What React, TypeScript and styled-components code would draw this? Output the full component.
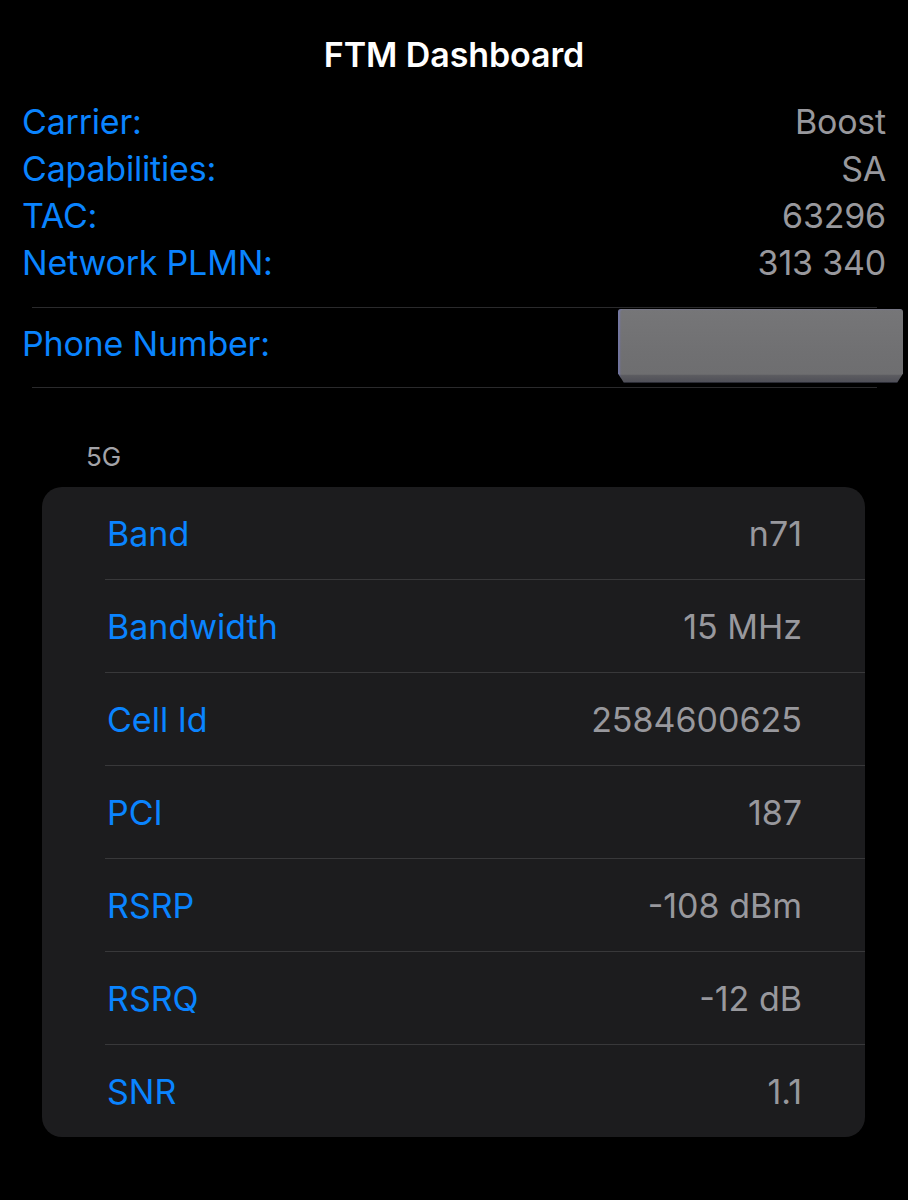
import React from 'react'
import styled, { createGlobalStyle } from 'styled-components'

type Field = { label: string, value: string }

const carrierInfo: Field[] = [
  { label: 'Carrier:', value: 'Boost' },
  { label: 'Capabilities:', value: 'SA' },
  { label: 'TAC:', value: '63296' },
  { label: 'Network PLMN:', value: '313 340' },
]

const cellInfo: Field[] = [
  { label: 'Band', value: 'n71' },
  { label: 'Bandwidth', value: '15 MHz' },
  { label: 'Cell Id', value: '2584600625' },
  { label: 'PCI', value: '187' },
  { label: 'RSRP', value: '-108 dBm' },
  { label: 'RSRQ', value: '-12 dB' },
  { label: 'SNR', value: '1.1' },
]

const GlobalStyle = createGlobalStyle`
  html, body {
    margin: 0;
    padding: 0;
    background: #000;
  }
  body {
    font-family: Inter, "Noto Sans", "Liberation Sans", sans-serif;
    -webkit-font-smoothing: antialiased;
  }
`

const Page = styled.div`
  width: 908px;
  min-height: 1200px;
  background: #000;
  color: #fff;
  overflow: hidden;
`

const Title = styled.h1`
  margin: 0 0 18px;
  padding-top: 30px;
  height: 50px;
  line-height: 50px;
  font-size: 34px;
  font-weight: 600;
  text-align: center;
  letter-spacing: -0.1px;
`

const InfoList = styled.div`
  display: flex;
  flex-direction: column;
  padding: 0 22px;
  margin-bottom: 21px;
`

const InfoRow = styled.div`
  display: flex;
  justify-content: space-between;
  align-items: center;
  height: 47px;
  font-size: 34px;
  letter-spacing: -0.2px;
`

const Label = styled.span`
  color: #0a84ff;
`

const Value = styled.span`
  color: #98989d;
`

const Rule = styled.div`
  height: 1px;
  background: #2a2a2c;
  margin: 0 31px 0 32px;
`

const PhoneRow = styled.div`
  display: flex;
  justify-content: space-between;
  align-items: center;
  height: 79px;
  padding-left: 22px;
  font-size: 34px;
  letter-spacing: -0.2px;

  ${Label} {
    padding-bottom: 8px;
  }
`

const Redacted = styled.div`
  width: 285px;
  height: 74px;
  margin-bottom: 4px;
  margin-right: 5px;
  border-radius: 3px 3px 0 0;
  background: linear-gradient(180deg, #767678 0%, #707072 60%, #6e6e70 88%, #5b5b60 90%, #4e4e56 100%);
  box-shadow: inset 2px 0 2px rgba(120, 130, 255, 0.35);
  clip-path: polygon(0 0, 100% 0, 100% 88%, 98% 100%, 2% 100%, 0 88%);
`

const SectionHeader = styled.div`
  margin: 54px 0 15px 86px;
  height: 30px;
  line-height: 30px;
  font-size: 26px;
  color: #a3a3a8;
`

const Card = styled.div`
  margin: 0 43px 0 42px;
  background: #1c1c1e;
  border-radius: 20px;
  overflow: hidden;
`

const CardRow = styled.div<{ $last?: boolean }>`
  display: flex;
  justify-content: space-between;
  align-items: center;
  height: 92px;
  margin-left: 63px;
  padding: 0 63px 0 2px;
  border-bottom: ${({ $last }) => ($last ? 'none' : '1px solid #38383a')};
  font-size: 34px;
  letter-spacing: 0;
`

const App = () => (
  <Page>
    <GlobalStyle />
    <Title>FTM Dashboard</Title>
    <InfoList>
      {carrierInfo.map(f => (
        <InfoRow key={f.label}>
          <Label>{f.label}</Label>
          <Value>{f.value}</Value>
        </InfoRow>
      ))}
    </InfoList>
    <Rule />
    <PhoneRow>
      <Label>Phone Number:</Label>
      <Redacted />
    </PhoneRow>
    <Rule />
    <SectionHeader>5G</SectionHeader>
    <Card>
      {cellInfo.map((f, i) => (
        <CardRow key={f.label} $last={i === cellInfo.length - 1}>
          <Label>{f.label}</Label>
          <Value>{f.value}</Value>
        </CardRow>
      ))}
    </Card>
  </Page>
)

export default App
